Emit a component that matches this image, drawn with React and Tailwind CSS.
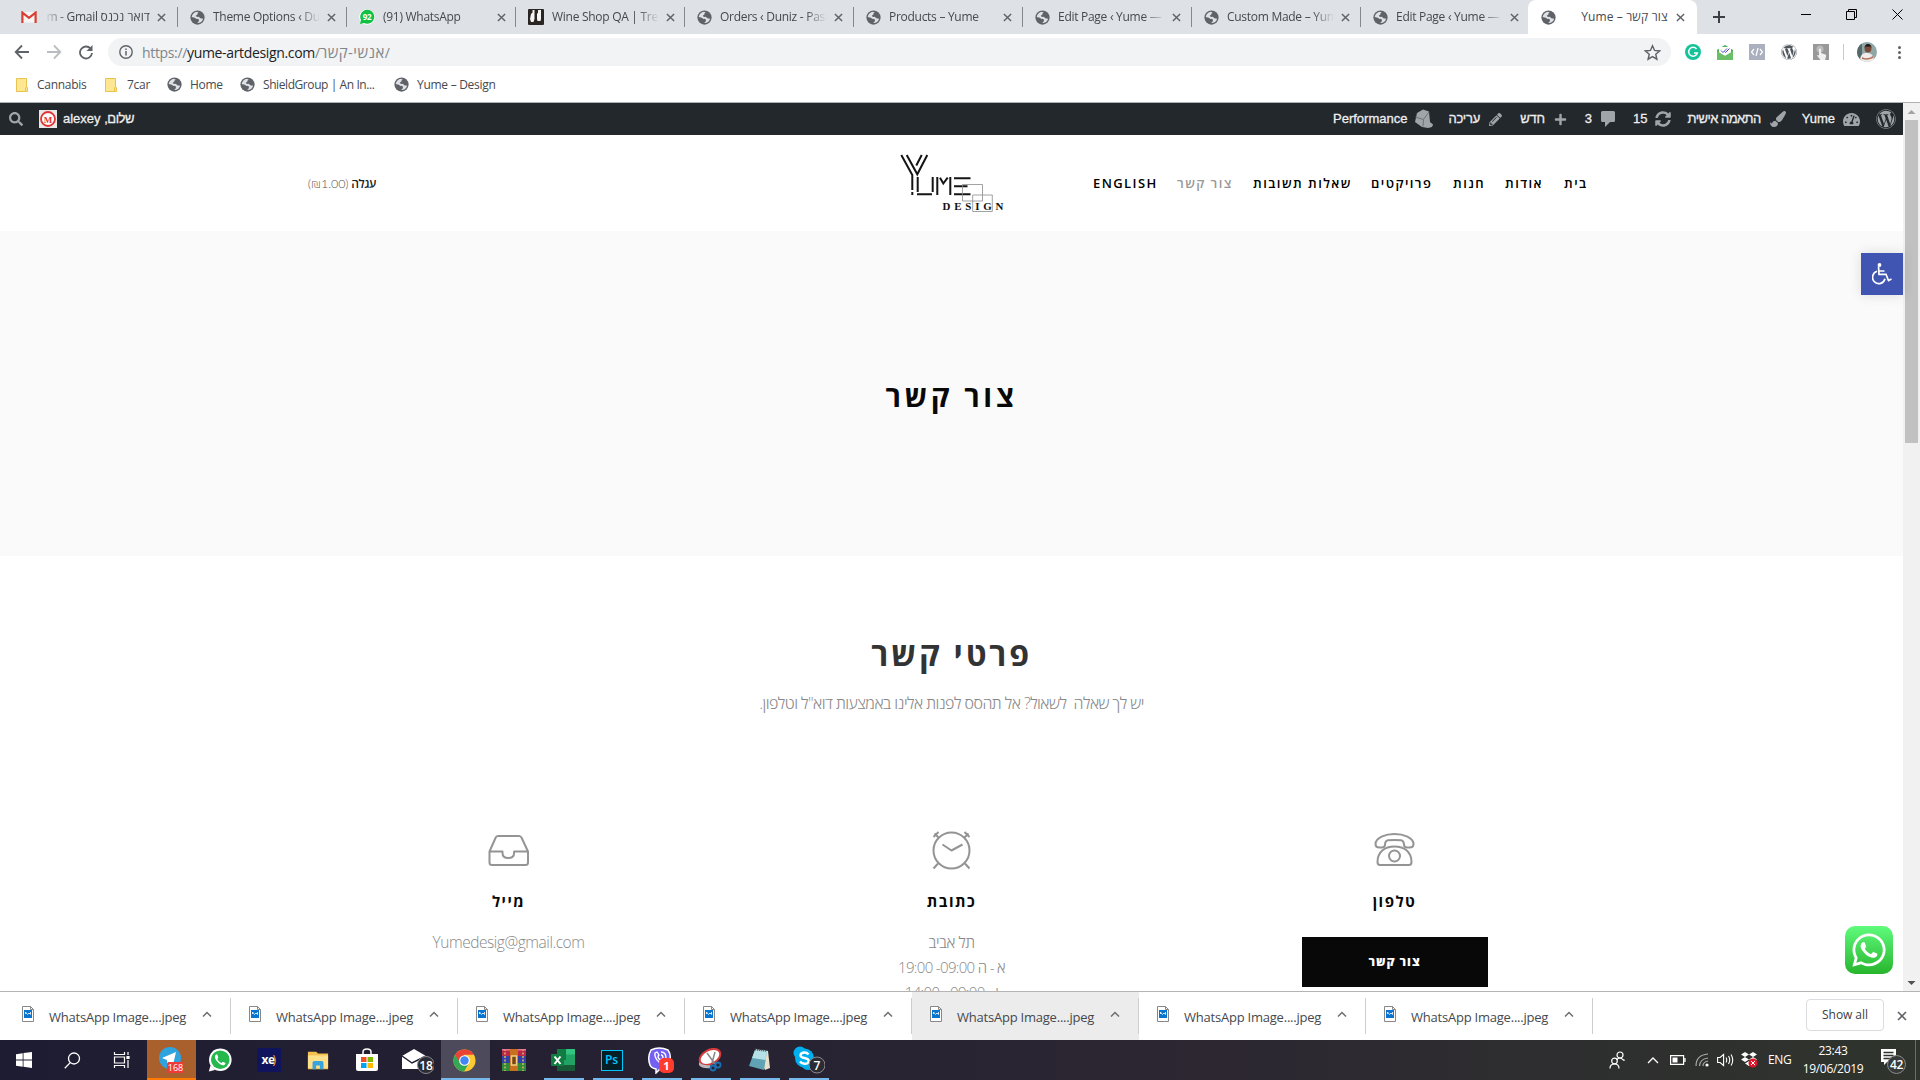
import React from "react";
import { FaWordpress, FaWhatsapp, FaPaintBrush, FaPlus, FaPencilAlt, FaSyncAlt, FaTachometerAlt, FaSearch } from "react-icons/fa";

const UI = "font-['Open_Sans','Noto_Sans',sans-serif]";

function Globe() {
  return (
    <svg viewBox="0 0 16 16" className="size-[15px] shrink-0">
      <circle cx="8" cy="8" r="7.6" fill="#5f6368" />
      <path d="M7.5 1.8c-3 .3-5.2 2.6-5.700 5.600l3.400.9 1.600 1.200 1.500-.3 1.300 1.200-.2 1.600-1.700 1.900c2.900.3 5.600-1.800 6.300-4.700l-3-.5-1.600-1.500-2 .2-1.300-1.300 1.800-1.300.1-1.200 1.300-.6z" fill="#dee1e6" />
    </svg>
  );
}

function Close({ className = "" }) {
  return (
    <svg viewBox="0 0 10 10" className={"size-[9px] shrink-0 " + className}>
      <path d="M1 1l8 8M9 1l-8 8" stroke="#5f6368" strokeWidth="1.6" />
    </svg>
  );
}

function Gmail() {
  return (
    <svg viewBox="0 0 16 12" className="h-[12px] w-[16px] shrink-0">
      <path d="M1.5 11.5V1h13v10.5z" fill="#f5f5f5" />
      <path d="M1.4 12V1.6L8 6.8l6.6-5.2V12" fill="none" stroke="#d93f32" strokeWidth="2.2" />
    </svg>
  );
}

function ChatBadge() {
  return (
    <svg viewBox="0 0 16 16" className="size-[16px] shrink-0">
      <circle cx="8" cy="8" r="7.8" fill="#fff" />
      <path d="M1 15l1-4a7 7 0 1 1 3 3z" fill="#12c143" />
      <text x="8" y="11" textAnchor="middle" fontSize="8" fontWeight="700" fill="#fff" fontFamily="Open Sans">92</text>
    </svg>
  );
}

function Bottles() {
  return (
    <svg viewBox="0 0 16 16" className="size-[16px] shrink-0">
      <rect width="16" height="16" rx="1" fill="#2a2422" />
      <path d="M2 10l1-5 1.500-1.500V1h2v9l-1 3H3zM9 10V5l1-1.500V1h3v9l-.5 2H9.500z" fill="#f4f4f4" />
    </svg>
  );
}

const tabs = [
  { icon: <Gmail />, rtl: true },
  { icon: <Globe />, text: "Theme Options ‹ Duniz" },
  { icon: <ChatBadge />, text: "(91) WhatsApp" },
  { icon: <Bottles />, text: "Wine Shop QA | Trello" },
  { icon: <Globe />, text: "Orders ‹ Duniz - Pastry" },
  { icon: <Globe />, text: "Products – Yume" },
  { icon: <Globe />, text: "Edit Page ‹ Yume — Word" },
  { icon: <Globe />, text: "Custom Made – Yume" },
  { icon: <Globe />, text: "Edit Page ‹ Yume — Word" },
];

function TabStrip() {
  return (
    <div className="flex h-[34px] bg-[#dee1e6] text-[12px] tracking-[-0.28px] text-[#45494e]">
      <div className="flex pl-[9px]">
        {tabs.map((t, i) => (
          <div key={i} className="flex w-[169px] items-center pl-[12px]">
            {t.icon}
            {t.rtl ? (
              <div className="ml-[7px] flex w-[106px] justify-end overflow-hidden whitespace-nowrap [mask-image:linear-gradient(to_left,#000_78%,transparent)]">
                <span dir="ltr">m - Gmail <bdi className="tracking-[0.1px]">דואר נכנס</bdi></span>
              </div>
            ) : (
              <div className="ml-[8px] w-[107px] overflow-hidden whitespace-nowrap [mask-image:linear-gradient(to_right,#000_80%,transparent)]">{t.text}</div>
            )}
            <Close className="ml-[7px]" />
            {i < 8 && <div className="ml-auto h-[20px] w-px bg-[#85888c]" />}
          </div>
        ))}
      </div>
      <div className="relative -ml-[2px] flex w-[169px] items-center rounded-t-[8px] bg-white pl-[13px]">
        <Globe />
        <div className="ml-[8px] w-[104px] text-right" dir="ltr"><span className="tracking-[0.1px]">Yume – </span><bdi className="tracking-[0.2px]">צור קשר</bdi></div>
        <Close className="ml-[8px]" />
      </div>
      <svg viewBox="0 0 12 12" className="mt-[11px] ml-[16px] size-[12px]"><path d="M6 0v12M0 6h12" stroke="#3c4043" strokeWidth="2" /></svg>
      <div className="ml-auto flex items-start gap-[35px] pt-[9px] pr-[17px]">
        <svg viewBox="0 0 10 11" className="h-[11px] w-[10px]"><path d="M0 5.500h10" stroke="#000" /></svg>
        <svg viewBox="0 0 11 11" className="size-[11px]"><path d="M.5 2.500h8v8h-8zM2.500 2.500v-2h8v8h-2" fill="none" stroke="#000" /></svg>
        <svg viewBox="0 0 11 11" className="size-[11px]"><path d="M.5 .5l10 10M10.500 .5l-10 10" stroke="#000" /></svg>
      </div>
    </div>
  );
}

function Toolbar() {
  return (
    <div className="flex h-[36px] items-center bg-white">
      <svg viewBox="0 0 84 16" className="ml-[14px] h-[16px] w-[84px] shrink-0" fill="none" strokeWidth="1.8">
        <path d="M15 8H2M8 1.500L1.700 8 8 14.500" stroke="#5f6368" />
        <path d="M33 8h13M40 1.500L46.300 8 40 14.500" stroke="#bbbdc0" />
        <path d="M76.500 4.500A6 6 0 1 0 78 9" stroke="#5f6368" />
        <path d="M78.500 1v6h-6z" fill="#5f6368" />
      </svg>
      <div className="ml-[10px] flex h-[28px] w-[1563px] items-center rounded-full bg-[#f1f3f4] pl-[11px]">
        <svg viewBox="0 0 14 14" className="size-[14px]"><circle cx="7" cy="7" r="6.200" fill="none" stroke="#5f6368" strokeWidth="1.400" /><path d="M7 6v4.500M7 3.500v1.500" stroke="#5f6368" strokeWidth="1.500" /></svg>
        <div dir="ltr" className="ml-[9px] text-[14px] tracking-[-0.34px] whitespace-nowrap text-[#80868b]">https://<span className="text-[#202124]">yume-artdesign.com</span>/<bdi className="text-[15px] leading-none tracking-[0.45px]">אנשי-קשר</bdi>/</div>
        <svg viewBox="0 0 24 24" className="mr-[10px] ml-auto size-[17px]"><path d="M12 2.500l2.900 6.600 7.100.7-5.400 4.700 1.600 7L12 17.800l-6.200 3.700 1.600-7L2 9.800l7.100-.7z" fill="none" stroke="#5f6368" strokeWidth="2" /></svg>
      </div>
      <div className="ml-[14px] flex items-center gap-[16px]">
        <svg viewBox="0 0 16 16" className="size-[16px]"><circle cx="8" cy="8" r="8" fill="#15c39a" /><path d="M11.500 5A4.400 4.400 0 1 0 12.300 9H9" fill="none" stroke="#fff" strokeWidth="1.500" /></svg>
        <svg viewBox="0 0 16 16" className="size-[16px]"><path d="M0 6l8-5 8 5v9H0z" fill="#4caf50" /><path d="M2 3h12v6l-6 3-6-3z" fill="#fff" /><path d="M4 6.500l2 2 4-4M7.500 7.500l1 1 4-4" stroke="#4a4ad0" fill="none" /><path d="M0 7l8 5 8-5v9H0z" fill="#6abf69" /></svg>
        <svg viewBox="0 0 16 16" className="size-[16px]"><rect width="16" height="16" fill="#aab0bd" /><path d="M5 5L2.500 8 5 11M11 5l2.500 3L11 11M9 4L7 12" stroke="#fff" fill="none" strokeWidth="1.200" /></svg>
        <FaWordpress className="size-[16px] text-[#50575e]" />
        <svg viewBox="0 0 16 16" className="size-[16px]"><rect width="16" height="16" fill="#999" /><circle cx="7" cy="5" r="3.500" fill="#bbb" /><path d="M6 5q1-1 2 0v4l4.500 1.500q1 .5.500 2L12 16H7.500L4 11.500q.5-1.200 2 0z" fill="#f0f0f0" /></svg>
      </div>
      <div className="ml-[14px] h-[16px] w-px bg-[#c8cacd]" />
      <svg viewBox="0 0 20 20" className="ml-[13px] size-[20px]"><clipPath id="avatarClip"><circle cx="10" cy="10" r="10" /></clipPath><g clipPath="url(#avatarClip)"><rect width="20" height="20" fill="#8fa7a6" /><rect width="5" height="20" fill="#56696a" /><path d="M3 20c0-8 3-9 7-9s7 2 7 9z" fill="#f1ebec" /><circle cx="11" cy="7" r="3.400" fill="#7a4b38" /><path d="M7.500 6.500a3.500 4.500 0 0 1 7 0l-1-2h-5z" fill="#1d1614" /><path d="M5 15q5 3 11-1v2q-5 3-11 1z" fill="#b5745c" /></g></svg>
      <div className="ml-[21px] flex flex-col gap-[2px]"><i className="size-[3px] rounded-full bg-[#5f6368]" /><i className="size-[3px] rounded-full bg-[#5f6368]" /><i className="size-[3px] rounded-full bg-[#5f6368]" /></div>
    </div>
  );
}

function Folder() {
  return (
    <svg viewBox="0 0 12 14" className="h-[14px] w-[12px] shrink-0"><path d="M.5 .5h10v9h1v4H.5z" fill="#ffe693" stroke="#e8c34e" /><path d="M9.500 13.500v-4" stroke="#e8c34e" /></svg>
  );
}

function Bookmarks() {
  return (
    <div className="flex h-[32px] items-center bg-white pb-[3px] pl-[16px] text-[12px] tracking-[-0.28px] whitespace-nowrap text-[#45494e]">
      <div className="flex w-[89px] items-center gap-[9px]"><Folder />Cannabis</div>
      <div className="flex w-[62px] items-center gap-[10px]"><Folder />7car</div>
      <div className="flex w-[73px] items-center gap-[8px]"><Globe />Home</div>
      <div className="flex w-[154px] items-center gap-[8px] tracking-[-0.42px]"><Globe />ShieldGroup | An In...</div>
      <div className="flex items-center gap-[8px]"><Globe />Yume – Design</div>
    </div>
  );
}

function AdminBar() {
  return (
    <div className="flex h-[32px] shrink-0 items-center bg-[#23282d] font-['Liberation_Sans',Arial,sans-serif] text-[13px] text-[#eee] [-webkit-text-stroke:0.3px]">
      <FaSearch className="ml-[9px] size-[14px] text-[#a0a5aa]" />
      <svg viewBox="0 0 18 18" className="ml-[16px] size-[18px]"><rect width="18" height="18" fill="#e8e8e8" /><circle cx="9" cy="9" r="7" fill="#fff" stroke="#e03434" strokeWidth="1.800" /><text x="9" y="12.500" fontSize="9" fontWeight="700" textAnchor="middle" fill="#e03434" fontFamily="Liberation Serif">M</text></svg>
      <div dir="rtl" className="ml-[6px]"><span className="tracking-[-0.5px]">שלום,</span> <bdi>alexey</bdi></div>
      <div className="ml-auto flex items-center whitespace-nowrap">
        <div className="mr-[6px]">Performance</div>
        <svg viewBox="0 0 20 20" className="mr-[15px] size-[20px]"><path d="M4 4l6-3.500 6 2L17 13l3 2.500q0 3-5 3.500l-6-1-7-5z" fill="#a0a5aa" /><path d="M2.500 8l8 2.500L16 3M10.500 10.500l-.5 7" stroke="#6d7277" fill="none" /></svg>
        <div className="mr-[9px] tracking-[-0.2px]">עריכה</div>
        <FaPencilAlt className="mr-[18px] size-[13px] text-[#a0a5aa]" />
        <div className="mr-[9px] tracking-[-0.2px]">חדש</div>
        <FaPlus className="mr-[18px] size-[13px] text-[#a0a5aa]" />
        <div className="mr-[9px]">3</div>
        <svg viewBox="0 0 14 16" className="mr-[18px] h-[16px] w-[14px]"><path d="M1.500 0h11Q14 0 14 1.500v8Q14 11 12.500 11H9l-5 5v-5H1.500Q0 11 0 9.500v-8Q0 0 1.500 0" fill="#a0a5aa" /></svg>
        <div className="mr-[7px]">15</div>
        <FaSyncAlt className="mr-[17px] size-[16px] text-[#a0a5aa]" />
        <div className="mr-[9px] tracking-[-0.55px]">התאמה אישית</div>
        <FaPaintBrush className="mr-[16px] size-[16px] text-[#a0a5aa]" />
        <div className="mr-[8px]">Yume</div>
        <FaTachometerAlt className="mr-[16px] size-[17px] text-[#a0a5aa]" />
        <FaWordpress className="mr-[7px] size-[20px] text-[#a0a5aa]" />
      </div>
    </div>
  );
}

function Logo() {
  return (
    <svg viewBox="-1 -1 104 60" className="h-[60px] w-[104px]" fill="none">
      <g stroke="#151515" strokeWidth="2">
        <path d="M.3 0L11.300 20v15M11.300 37v3M5.700 0L16.300 19.300 26.300 0M20.700 0L15.300 10.500" />
        <path d="M16.700 22v15M16 39.300h15M31.700 22v15M36.300 22v18M49.300 22v18M39 22.700l3.300 5.800 4.400-5.800" />
        <path d="M53 23.300h16.500M53 31.300h13.500M53 39.300h16.500" />
      </g>
      <path d="M61.500 29.500h20v16.500h-20zM71.700 40h19.600v16.500H71.700z" stroke="#8c8c8c" strokeWidth=".8" />
      <g fontFamily="Liberation Serif" fontWeight="700" fontSize="9.500" fill="#111">
        <text transform="translate(41.500 55) scale(1.150 1)" textLength="53">DESIGN</text>
      </g>
    </svg>
  );
}

const nav = [
  ["ENGLISH", "w-[84px] tracking-[1.400px]"],
  ["צור קשר", "w-[76px] text-[#999]"],
  ["שאלות תשובות", "w-[118px]"],
  ["פרויקטים", "w-[82px]"],
  ["חנות", "w-[52px]"],
  ["אודות", "w-[59px]"],
  ["בית", "w-[24px]"],
];

function SiteHeader() {
  return (
    <header className="flex h-[96px] shrink-0 items-center bg-white pt-[2px]">
      <div dir="rtl" className="ml-[307px] w-[69px] text-[12px] tracking-[-0.4px] whitespace-nowrap text-[#222]"><b className="font-semibold">עגלה</b> <span className="font-['Lato','Open_Sans',sans-serif] text-[12.5px] font-light tracking-[-0.1px] text-[#555]">(<bdi>₪1.00</bdi>)</span></div>
      <div className="ml-[524px]"><Logo /></div>
      <nav className="ml-[89px] flex text-[13px] font-semibold tracking-[1.450px] whitespace-nowrap text-black">
        {nav.map(([t, c]) => <a key={t} className={c}>{t}</a>)}
      </nav>
    </header>
  );
}

const iconProps = { fill: "none", stroke: "#949494", strokeWidth: 2, strokeLinejoin: "round" };
const sectionTitle = "mt-[11px] text-[15px] leading-[36px] font-bold tracking-[1.500px] text-[#080808]";

function Contact() {
  return (
    <main className="flex grow flex-col items-center overflow-hidden bg-white">
      <h2 className="mt-[74px] h-[48px] text-[32px] leading-[48px] font-bold tracking-[2.900px] text-[#333]">פרטי קשר</h2>
      <p dir="rtl" className="mt-[11px] h-[28px] text-[16px] leading-[28px] font-light tracking-[-0.53px] whitespace-pre text-[#888]">{'יש לך שאלה  לשאול? אל תהסס לפנות אלינו באמצעות דוא"ל וטלפון.'}</p>
      <div className="mt-[111px] grid w-[1329px] grid-cols-3 text-center">
        <section className="flex flex-col items-center">
          <svg viewBox="0 0 42 44" className="h-[44px] w-[42px]" {...iconProps}><path d="M1.500 23.500L7.500 10q.6-2 2.500-2h21q2 0 2.700 2l6.300 13.500V34.500Q40 37 37.500 37h-33.500Q1.500 37 1.500 34.500zM1.500 23.500h13V25q0 5 5.800 5t5.800-5v-1.500H40" /></svg>
          <h3 className={sectionTitle}>מייל</h3>
          <p className="mt-[11px] text-[15.500px] leading-[25px] font-light tracking-[-0.450px] text-[#888]">Yumedesig@gmail.com</p>
        </section>
        <section className="flex flex-col items-center">
          <svg viewBox="0 0 42 44" className="h-[44px] w-[42px]" {...iconProps}><circle cx="20.500" cy="22.500" r="18" /><path d="M11.500 16.500l9 6 11-6M7 35.500l-4.500 5M34 35.500l4.500 5M2.500 9l5-5M3.500 5.500l4 4M38.500 9l-5-5M37.500 5.500l-4 4" /></svg>
          <h3 className={sectionTitle}>כתובת</h3>
          <div dir="rtl" className="mt-[11px] h-[52px] text-[15px] leading-[25px] font-light tracking-[-0.650px] text-[#888]">
            <p className="text-[15.500px] tracking-[-0.400px]">תל אביב</p>
            <p>א - ה <bdi dir="ltr">19:00 -09:00</bdi></p>
            <p>ו - <bdi dir="ltr">14:00 - 09:00</bdi></p>
          </div>
        </section>
        <section className="flex flex-col items-center">
          <svg viewBox="0 0 42 44" className="h-[44px] w-[42px]" {...iconProps}><path d="M1.500 16C1.500 9.500 11.500 6 20.500 6s19 3.500 19 10c0 2.500-2 3.500-4 3.500H33q-3 0-3-3-.3-4-3-4.300-6.500-.6-13 0-2.700.3-3 4.300 0 3-3 3H5.500C3.500 19.500 1.500 18.500 1.500 16z" /><path d="M3.500 34C3.500 24 10.500 18.500 20.500 18.500s17 5.500 17 15.500q0 3-2.500 3H6Q3.500 37 3.500 34z" /><circle cx="20.500" cy="28" r="5.500" /></svg>
          <h3 className={sectionTitle}>טלפון</h3>
          <div className="mt-[18px] flex h-[50px] w-[186px] items-center justify-center bg-[#080808] text-[12px] font-extrabold tracking-[0.950px] text-white">צור קשר</div>
        </section>
      </div>
    </main>
  );
}

function Page() {
  return (
    <div className="relative flex h-[888px] overflow-hidden">
      <div className="flex w-[1903px] flex-col">
        <AdminBar />
        <SiteHeader />
        <div className="flex h-[325px] shrink-0 items-center justify-center bg-[#fafafa] pt-[4px] text-[29px] font-bold tracking-[3.700px] text-[#080808]">צור קשר</div>
        <Contact />
      </div>
      <div className="flex w-[17px] flex-col items-center bg-[#f1f1f1]">
        <svg viewBox="0 0 17 17" className="size-[17px]"><path d="M4.500 11L8.500 7l4 4z" fill="#a3a3a3" /></svg>
        <div className="h-[323px] w-[13px] bg-[#c1c1c1]" />
        <svg viewBox="0 0 17 17" className="mt-auto size-[17px]"><path d="M4.500 7l4 4 4-4z" fill="#505050" /></svg>
      </div>
      <div className="absolute top-[150px] left-[1861px] flex size-[42px] items-center justify-center bg-[#4054b2] shadow-[0_0_12px_rgba(0,0,0,0.12)]">
        <svg viewBox="0 0 20 22" className="h-[22px] w-[20px]" fill="none" stroke="#fff" strokeWidth="1.700"><circle cx="7.500" cy="2" r="1.900" fill="#fff" stroke="none" /><path d="M6.500 3.500l.5 7.800h7l2.500 6.200 3-1.500M7 8h5.500M5 8.300a6.300 6.300 0 1 0 8 7.500" /></svg>
      </div>
      <div className="absolute top-[823px] left-[1845px] flex size-[48px] items-center justify-center rounded-[10px] bg-gradient-to-b from-[#5ffb7b] to-[#27b52b]">
        <FaWhatsapp className="size-[38px] text-white" />
      </div>
    </div>
  );
}

function Downloads() {
  return (
    <div className="flex h-[49px] border-t border-[#b4b4b4] bg-white pl-[4px] text-[13px] tracking-[-0.220px] text-[#45494e]">
      {[0, 1, 2, 3, 4, 5, 6].map((i) => (
        <div key={i} className={"flex w-[227px] items-center " + (i === 4 ? "bg-[#ececec]" : "")}>
          <svg viewBox="0 0 12 16" className="ml-[18px] h-[16px] w-[12px] shrink-0 -translate-y-[2px]"><path d="M.5 .5h8l3 3v12H.5z" fill="#fff" stroke="#888" /><path d="M8.500 .5v3h3" fill="none" stroke="#888" /><rect x="2" y="4" width="8" height="8" fill="#0a74d1" /><path d="M3.500 8V6l2 2.500L7 7l1.500 1.500V6" stroke="#fff" strokeWidth=".8" fill="none" /></svg>
          <span className="ml-[15px] w-[137px] pt-[4px] whitespace-nowrap">WhatsApp Image....jpeg</span>
          <svg viewBox="0 0 10 6" className="ml-[16px] h-[6px] w-[10px] -translate-y-[2px]"><path d="M1 5.500l4-4 4 4" fill="none" stroke="#6b6f73" strokeWidth="1.500" /></svg>
          <div className="ml-auto h-[36px] w-px bg-[#cdcdcd]" />
        </div>
      ))}
      <div className="mt-[7px] ml-auto flex h-[32px] w-[78px] items-center justify-center rounded-[4px] border border-[#dadce0] text-[12px] tracking-[-0.050px] text-[#3c4043]">Show all</div>
      <Close className="mt-[19px] mr-[13px] ml-[13px] size-[10px]" />
    </div>
  );
}

function TaskButton({ children, className = "", bar = "" }) {
  return (
    <div className={"flex h-[40px] w-[49px] flex-col items-center " + className}>
      <div className="flex h-[38px] items-center pt-[2px] pr-[2px]">{children}</div>
      <div className={"h-[2px] " + bar} />
    </div>
  );
}

const blueBar = "w-[40px] bg-[#76b9ed]";

function Taskbar() {
  return (
    <div className="flex h-[40px] bg-gradient-to-r from-[#1e1c32] via-[#2c2632] via-60% to-[#2f342c] text-white">
      <TaskButton><svg viewBox="0 0 16 16" className="size-[16px]" fill="#fff"><path d="M0 2.200l6.700-1v6.400H0zM7.500 1.100L16 0v7.600H7.500zM0 8.400h6.700v6.400l-6.700-1zM7.500 8.400H16V16l-8.500-1.200z" /></svg></TaskButton>
      <TaskButton><svg viewBox="0 0 17 17" className="size-[17px]" fill="none" stroke="#fff" strokeWidth="1.300"><circle cx="10" cy="6.500" r="5.500" /><path d="M6.200 10.600L.8 16.200" /></svg></TaskButton>
      <TaskButton><svg viewBox="0 0 17 16" className="h-[16px] w-[17px]" fill="none" stroke="#fff" strokeWidth="1.200"><path d="M1.500 0v2.500h10V0M1.500 5h10v6h-10zM1.500 16v-2.500h10V16M15 0v3M15 8v8" /><path d="M14 4.500h2v2h-2z" fill="#fff" /></svg></TaskButton>
      <TaskButton className="bg-[#aa602d]" bar="w-[49px] bg-[#ff7a00]">
        <svg viewBox="0 0 28 28" className="size-[28px]"><circle cx="13" cy="12" r="11" fill="#2ea3de" /><path d="M5 12l14-6-3 13-4-3-2 2v-4z" fill="#fff" /><rect x="10" y="16" width="17" height="11" rx="2" fill="#ef3a35" /><text x="18.500" y="25" fontSize="9" textAnchor="middle" fill="#fff" fontFamily="Open Sans">168</text></svg>
      </TaskButton>
      <TaskButton><svg viewBox="0 0 24 24" className="size-[24px]"><circle cx="12.300" cy="11.700" r="11.300" fill="#fff" /><path d="M.8 23.500l1.700-6 4.500 4.500z" fill="#fff" /><circle cx="12.300" cy="11.700" r="9.300" fill="#25b84c" /><path d="M8 6.500c-1.500 1-1.500 3 0 5.500s4 4.700 6.500 5.300c1.800.3 3.200-1 3-2.300l-2.700-1.300-1.300 1.400c-2-.8-3.500-2.300-4.200-4l1-1.300L9.300 6.500z" fill="#fff" /></svg></TaskButton>
      <TaskButton><div className="flex size-[24px] items-center justify-center bg-[#10145c] text-[12px] leading-none font-bold tracking-[-0.5px]">xe<span className="-ml-[2px] font-normal text-[#f2a11c]">)</span></div></TaskButton>
      <TaskButton><svg viewBox="0 0 24 20" className="h-[20px] w-[22px]"><path d="M1 1h9l2 2h11v17H1z" fill="#f5c04f" /><path d="M1 5h22v14H1z" fill="#ffe08a" /><path d="M6 20v-7q0-2 2-2h8q2 0 2 2v7h-4v-4h-4v4z" fill="#38a4dd" /></svg></TaskButton>
      <TaskButton><svg viewBox="0 0 24 24" className="size-[24px]"><path d="M8 6V4q0-3 4-3t4 3v2" stroke="#fff" strokeWidth="1.500" fill="none" /><path d="M1 6h22v15q0 2-2 2H3q-2 0-2-2z" fill="#fff" /><path d="M6 9h5.500v5H6z" fill="#f25022" /><path d="M12.500 9H18v5h-5.500z" fill="#7fba00" /><path d="M6 15h5.500v5H6z" fill="#00a4ef" /><path d="M12.500 15H18v5h-5.500z" fill="#ffb900" /></svg></TaskButton>
      <TaskButton><svg viewBox="-2 0 36 28" className="h-[28px] w-[36px]"><path d="M2 10l12-7 12 7v13H2z" fill="#fff" /><path d="M2 10l10 7 14-7" fill="none" stroke="#1e1c32" strokeWidth="1.500" /><circle cx="26" cy="19" r="8.500" fill="#2b2b33" stroke="#8a8a8f" /><text x="26" y="23.500" fontSize="12" fontWeight="600" textAnchor="middle" fill="#fff" fontFamily="Open Sans">18</text></svg></TaskButton>
      <TaskButton className="bg-[#4c4a5b]" bar="w-[49px] bg-[#76b9ed]"><svg viewBox="0 0 24 24" className="size-[23px]"><circle cx="12" cy="12" r="11.500" fill="#fcc934" /><path d="M12 .5a11.500 11.500 0 0 0-10 5.800l5 8.700 5-9h10A11.500 11.500 0 0 0 12 .5z" fill="#ea4335" /><path d="M2 6.300A11.500 11.500 0 0 0 11.500 23.500l5-8.500-9-1z" fill="#34a853" /><circle cx="12" cy="12" r="5.600" fill="#fff" /><circle cx="12" cy="12" r="4.400" fill="#4285f4" /></svg></TaskButton>
      <TaskButton><svg viewBox="0 0 24 22" className="h-[22px] w-[24px]"><path d="M0 0h24v7H0z" fill="#b8284a" /><path d="M0 7h24v7H0z" fill="#3340a8" /><path d="M0 14h24v8H0z" fill="#2f8a3a" /><path d="M3 0v22M21 0v22" stroke="#d9b75a" strokeWidth="1.500" strokeDasharray="2 1.500" /><path d="M0 0h24v1.500H0z" fill="#e8788c" /><path d="M8 0h8v22H8z" fill="#c9701f" /><path d="M9.500 7h5v9h-5z" fill="#7a4310" stroke="#f0d080" strokeWidth="1.500" /></svg></TaskButton>
      <TaskButton bar={blueBar}><svg viewBox="0 0 24 22" className="h-[22px] w-[24px]"><path d="M6 0h18v22H6z" fill="#21a366" /><path d="M6 0h9v11H6z" fill="#107c41" /><path d="M15 0h9v5.500h-9z" fill="#33c481" /><path d="M6 16h18v6H6z" fill="#185c37" /><rect y="5" width="13" height="12" rx="1" fill="#107c41" /><path d="M3.500 7.500l6 7.500M9.500 7.500l-6 7.500" stroke="#fff" strokeWidth="2" /></svg></TaskButton>
      <TaskButton bar={blueBar}><div className="flex h-[21px] w-[22px] items-center justify-center border border-[#00c8ff] bg-[#061e26] text-[12px] leading-none font-semibold text-[#00c8ff]">Ps</div></TaskButton>
      <TaskButton bar={blueBar}>
        <svg viewBox="0 0 28 28" className="size-[28px]"><path d="M4 4q8-4 17 0 4 5 1 15-3 4-9 4l-4 4v-4q-5-1-6-4-3-8 1-15z" fill="#7360f2" stroke="#fff" strokeWidth="1.500" /><path d="M8 7c-1 4 3 10 8 11l2-3-3-2-1 1q-3-1-3-4l1-1-2-3zM14 6q5 0 5 6M14 9q2 0 2 3" stroke="#fff" fill="none" strokeWidth="1.300" /><rect x="12" y="12" width="15" height="15" rx="5" fill="#ff3b30" /><text x="19.500" y="23.500" fontSize="11" fontWeight="700" textAnchor="middle" fill="#fff" fontFamily="Open Sans">1</text></svg>
      </TaskButton>
      <TaskButton bar={blueBar}><svg viewBox="0 0 26 24" className="h-[24px] w-[26px]"><ellipse cx="13" cy="9" rx="11" ry="7" transform="rotate(-28 13 9)" fill="#fff" stroke="#d53b3b" strokeWidth="2" /><path d="M2 14q4 4 11 3l1 3Q5 21 2 17z" fill="#b9b9c0" /><path d="M10 5l8 11M18 4l-3 11" stroke="#888" strokeWidth="1.500" /><circle cx="16" cy="20" r="2.500" fill="none" stroke="#1a6fb5" strokeWidth="1.800" /><circle cx="21" cy="17" r="2.500" fill="none" stroke="#1a6fb5" strokeWidth="1.800" /></svg></TaskButton>
      <TaskButton bar={blueBar}><svg viewBox="0 0 24 24" className="size-[24px]"><path d="M8 1l13 2 2 17-5 2z" fill="#e8e0c8" /><path d="M8 2l12 1-3 19-15-4z" fill="#5fa3b5" /><path d="M8 2l12 1-1.500 9L5 10z" fill="#b5e0e6" /><path d="M8 1.500l12 1.500" stroke="#556" strokeDasharray="1 1" strokeWidth="2" /></svg></TaskButton>
      <TaskButton bar={blueBar}>
        <svg viewBox="-1 0 34 28" className="h-[28px] w-[34px]"><circle cx="8" cy="7" r="6.500" fill="#00aff0" /><circle cx="16" cy="17" r="7" fill="#00aff0" /><circle cx="12.500" cy="12" r="9.500" fill="#00aff0" /><path d="M16.500 8.500q-1.500-2-4-2-4 0-4 2.700 0 2.200 4 2.800 4.200.8 4.200 3 0 2.700-4.200 2.700-3 0-4.500-2.200" fill="none" stroke="#fff" strokeWidth="2.400" /><circle cx="25" cy="19" r="8" fill="#2b2b33" stroke="#8a8a8f" /><text x="25" y="23.500" fontSize="12" fontWeight="600" textAnchor="middle" fill="#fff" fontFamily="Open Sans">7</text></svg>
      </TaskButton>
      <div className="ml-auto flex items-center text-[12px] tracking-[-0.3px]">
        <svg viewBox="0 0 16 18" className="h-[18px] w-[16px]" fill="none" stroke="#fff" strokeWidth="1.200"><circle cx="11" cy="4" r="3" /><path d="M7.500 9q3-4 7 0M15 10V8.500" /><circle cx="5.500" cy="10" r="2.800" /><path d="M1 17.500q0-4.500 4.500-4.500t4.500 4.500" /></svg>
        <svg viewBox="0 0 12 8" className="ml-[22px] h-[8px] w-[12px]" fill="none" stroke="#fff" strokeWidth="1.300"><path d="M1 7l5-5 5 5" /></svg>
        <svg viewBox="0 0 16 10" className="ml-[11px] h-[10px] w-[16px]"><path d="M.6 .6h13v8.800h-13zM15 3v4" fill="none" stroke="#fff" strokeWidth="1.200" /><path d="M2.500 2.500h5v5h-5z" fill="#fff" /></svg>
        <svg viewBox="0 0 14 14" className="ml-[9px] size-[14px]" fill="none" stroke="#aaa" strokeWidth="1.200"><path d="M1 13Q1 2 13 1M4.500 13Q5 6 13 5M8 13q0-4 5-5" /><circle cx="12" cy="12" r="1" fill="#fff" stroke="#fff" /></svg>
        <svg viewBox="0 0 17 14" className="ml-[8px] h-[14px] w-[17px]" fill="none" stroke="#fff" strokeWidth="1.100"><path d="M.6 4.500h2.500l3.500-3v11l-3.500-3H.6zM9 4.500q1.500 2.500 0 5M11.500 3q2.500 4 0 8M14 1.500q3.500 5.500 0 11" /></svg>
        <svg viewBox="0 0 17 16" className="ml-[7px] h-[16px] w-[17px]"><path d="M4 0l4 2.500L4 5 0 2.500zM12 0l4 2.500L12 5 8 2.500zM4 5l4 2.500L4 10 0 7.500zM12 5l4 2.500-4 2.500-4-2.500zM8 9l4 2.500L8 14l-4-2.500z" fill="#fff" /><circle cx="12" cy="11" r="4.500" fill="#e0162b" /><path d="M10 9l4 4M14 9l-4 4" stroke="#fff" /></svg>
        <span className="ml-[10px] w-[24px]">ENG</span>
        <div className="ml-[10px] w-[62px] text-center leading-[18px] whitespace-nowrap">23:43<br />19/06/2019</div>
        <svg viewBox="0 0 28 28" className="ml-[16px] h-[28px] w-[28px]"><path d="M1 3h15v13H7l-3 3v-3H1z" fill="#fff" /><path d="M3.500 6.500h10M3.500 9.500h10M3.500 12.500h7" stroke="#2f342c" strokeWidth="1.300" /><circle cx="16.500" cy="18.500" r="9" fill="#373a36" stroke="#8a8a8f" /><text x="16.500" y="23" fontSize="12" fontWeight="600" textAnchor="middle" fill="#fff" fontFamily="Open Sans">42</text></svg>
        <div className="mr-[4px] ml-[7px] h-[40px] w-px bg-[#6a6d68]" />
      </div>
    </div>
  );
}

export default function App() {
  return (
    <div dir="ltr" className={"flex h-[1080px] w-[1920px] flex-col overflow-hidden bg-white " + UI}>
      <TabStrip />
      <Toolbar />
      <Bookmarks />
      <div className="h-px bg-[#b0b0b0]" />
      <Page />
      <Downloads />
      <Taskbar />
    </div>
  );
}
